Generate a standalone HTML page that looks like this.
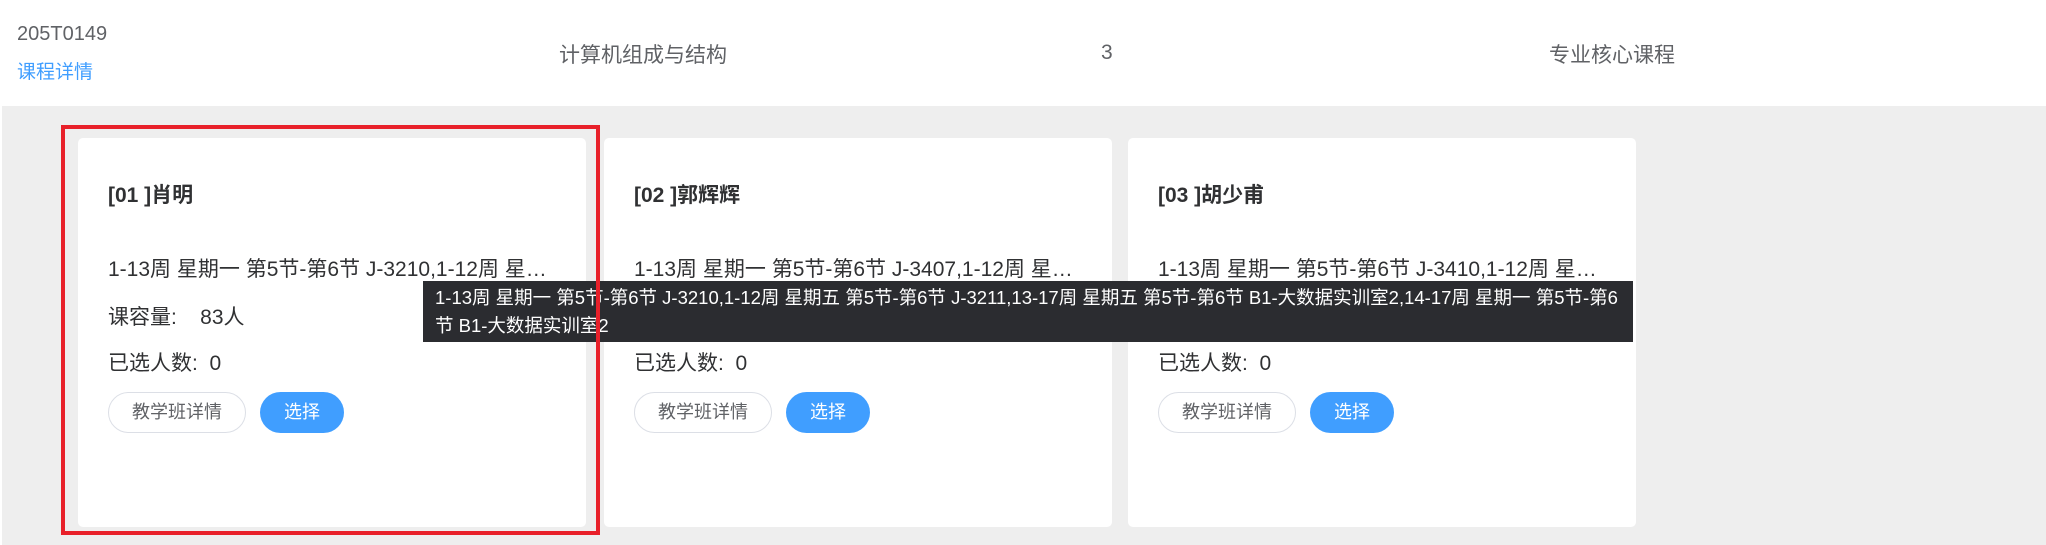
<!DOCTYPE html>
<html><head><meta charset="utf-8"><style>
*{margin:0;padding:0;box-sizing:border-box}
body{width:2046px;height:545px;overflow:hidden;background:#fff;font-family:"Liberation Sans","Noto Sans CJK SC",sans-serif;color:#303133;position:relative}
.abs{position:absolute;white-space:nowrap}
.gray{position:absolute;left:2px;top:106px;width:2044px;height:439px;background:#eeeeee}
.card{position:absolute;top:138px;width:508px;height:389px;background:#fff;border-radius:5px}
.card .t{position:absolute;left:30px;top:41px;font-size:21px;font-weight:bold}
.card .l{position:absolute;left:30px;font-size:21px;white-space:nowrap}
.b1{position:absolute;left:30px;top:254px;width:138px;height:41px;border:1px solid #dcdfe6;border-radius:21px;font-size:18px;color:#606266;text-align:center;line-height:39px}
.b2{position:absolute;left:182px;top:254px;width:84px;height:41px;background:#409eff;border-radius:21px;font-size:18px;color:#fff;text-align:center;line-height:41px}
.tip{position:absolute;left:423px;top:281px;width:1210px;height:61px;background:#2b2c30;color:#fff;font-size:18.5px;line-height:28px;padding:3px 0 0 12px;white-space:nowrap;overflow:hidden}
.red{position:absolute;left:61px;top:125px;width:539px;height:410px;border:4px solid #e8202a}
</style></head><body>
<div class="abs" style="left:17px;top:23px;font-size:20px;color:#606266">205T0149</div>
<div class="abs" style="left:17px;top:57px;font-size:19px;color:#409eff">课程详情</div>
<div class="abs" style="left:559px;top:39px;font-size:21px;color:#606266">计算机组成与结构</div>
<div class="abs" style="left:1101px;top:41px;font-size:21px;color:#606266">3</div>
<div class="abs" style="left:1549px;top:39px;font-size:21px;color:#606266">专业核心课程</div>
<div class="gray"></div>
<div class="card" style="left:78px">
<div class="t">[01 ]肖明</div>
<div class="l" style="top:115px">1-13周 星期一 第5节-第6节 J-3210,1-12周 星…</div>
<div class="l" style="top:163px">课容量:&nbsp;&nbsp;&nbsp;&nbsp;83人</div>
<div class="l" style="top:209px">已选人数:&nbsp;&nbsp;0</div>
<div class="b1">教学班详情</div><div class="b2">选择</div>
</div>
<div class="card" style="left:604px">
<div class="t">[02 ]郭辉辉</div>
<div class="l" style="top:115px">1-13周 星期一 第5节-第6节 J-3407,1-12周 星…</div>
<div class="l" style="top:163px">课容量:&nbsp;&nbsp;&nbsp;&nbsp;83人</div>
<div class="l" style="top:209px">已选人数:&nbsp;&nbsp;0</div>
<div class="b1">教学班详情</div><div class="b2">选择</div>
</div>
<div class="card" style="left:1128px">
<div class="t">[03 ]胡少甫</div>
<div class="l" style="top:115px">1-13周 星期一 第5节-第6节 J-3410,1-12周 星…</div>
<div class="l" style="top:163px">课容量:&nbsp;&nbsp;&nbsp;&nbsp;83人</div>
<div class="l" style="top:209px">已选人数:&nbsp;&nbsp;0</div>
<div class="b1">教学班详情</div><div class="b2">选择</div>
</div>
<div class="tip">1-13周 星期一 第5节-第6节 J-3210,1-12周 星期五 第5节-第6节 J-3211,13-17周 星期五 第5节-第6节 B1-大数据实训室2,14-17周 星期一 第5节-第6<br>节 B1-大数据实训室2</div>
<div class="red"></div>
</body></html>
